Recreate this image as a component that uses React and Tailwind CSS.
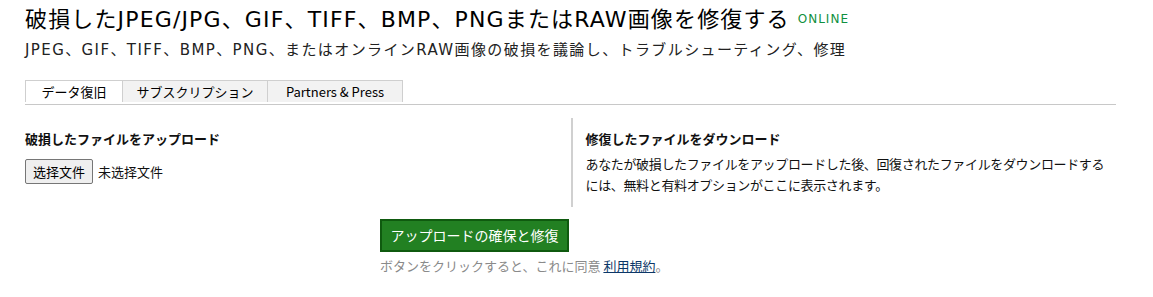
export default function App() {
  const jp = { fontFamily: '"Noto Sans CJK JP", "Noto Sans", sans-serif' };
  return (
    <div className="min-h-[297px] w-[1153px] bg-white text-[#111]" style={jp}>
      <div className="ml-[25px] w-[1091px] pt-[5px]">
        <div className="flex items-start gap-[8px] font-['DejaVu_Sans','Noto_Sans_CJK_JP',sans-serif]">
          <h1 className="text-[22px] leading-[30px] tracking-[1.15px] text-black">
            破損したJPEG/JPG、GIF、TIFF、BMP、PNGまたはRAW画像を修復する
          </h1>
          <span className="mt-[6px] text-[12px] leading-[16px] tracking-[1px] text-[#109040]">ONLINE</span>
        </div>
        <p className="mt-[5px] font-['DejaVu_Sans','Noto_Sans_CJK_JP',sans-serif] text-[15px] leading-[20px] tracking-[1.4px] text-[#222]">
          JPEG、GIF、TIFF、BMP、PNG、またはオンラインRAW画像の破損を議論し、トラブルシューティング、修理
        </p>

        <div className="mt-[20px] flex border-b border-[#c8c8c8] pb-[2px]">
          <div className="flex h-[22px] w-[98px] items-center justify-center border border-b-0 border-[#cfcfcf] bg-white text-[13px] text-black">
            データ復旧
          </div>
          <div className="flex h-[22px] w-[145px] items-center justify-center border-t border-r border-[#cfcfcf] bg-[#f2f2f2] text-[13px] text-black">
            サブスクリプション
          </div>
          <div className="flex h-[22px] w-[135px] items-center justify-center border-t border-r border-[#cfcfcf] bg-[#f2f2f2] text-[13px] text-black">
            Partners &amp; Press
          </div>
        </div>

        <div className="mt-[13px] grid grid-cols-2">
          <div className="pt-[12px] pb-[20px]">
            <h2 className="text-[13px] font-bold leading-[18px]">破損したファイルをアップロード</h2>
            <div className="mt-[11px] flex items-center gap-[5px] text-[13px]">
              <button className="h-[25px] rounded-[2px] border border-[#767676] bg-[#efefef] px-[7px] text-[13px] text-black">
                选择文件
              </button>
              <span>未选择文件</span>
            </div>
          </div>
          <div className="border-l-2 border-[#d0d0d0] pl-[13px] pt-[12px] pb-[12px]">
            <h2 className="text-[13px] font-bold leading-[18px]">修復したファイルをダウンロード</h2>
            <p className="mt-[5px] text-[13px] leading-[21px] tracking-[-0.35px] text-[#111]">
              あなたが破損したファイルをアップロードした後、回復されたファイルをダウンロードするには、無料と有料オプションがここに表示されます。
            </p>
          </div>
        </div>

        <div className="ml-[355px] mt-[12px]">
          <button className="h-[33px] w-[189px] border-2 border-[#0f5a0f] bg-[#228022] text-[14px] text-white">
            アップロードの確保と修復
          </button>
          <p className="mt-[5px] text-[13px] leading-[18px] text-[#8a8a8a]">
            ボタンをクリックすると、これに同意{" "}
            <a href="#" className="text-[#0c3768] underline">利用規約</a>。
          </p>
        </div>
      </div>
    </div>
  );
}
